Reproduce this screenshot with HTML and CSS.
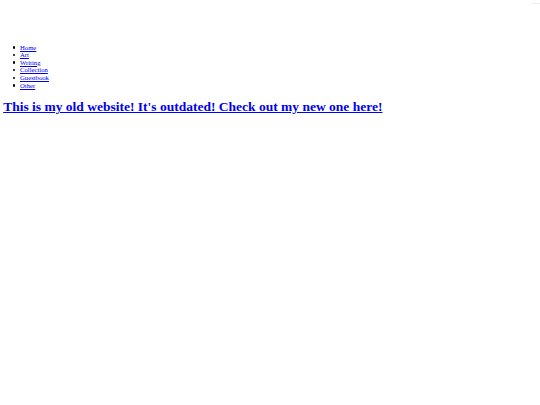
FILE: index.html
```html
<!DOCTYPE html>
<html>
<head>
<meta charset="utf-8">
<link rel="stylesheet" href="styles.css">
</head>
<body>
<div class="corner"></div>
<div class="header"></div>
<ul class="nav">
<li><a href="#">Home</a></li>
<li><a href="#">Art</a></li>
<li><a href="#">Writing</a></li>
<li><a href="#">Collection</a></li>
<li><a href="#">Guestbook</a></li>
<li><a href="#">Other</a></li>
</ul>
<h1 class="title"><a href="#">This is my old website! It's outdated! Check out my new one here!</a></h1>
</body>
</html>
```
FILE: styles.css
```css
html, body { background: #fff; }
body {
  margin: 3.2px;
  font-family: "Liberation Serif", "Times New Roman", serif;
  font-size: 6.7px;
}
a { color: #0000ee; }
.header { height: 34px; }
.nav {
  margin: 6.4px 0;
  padding-left: 16.8px;
  line-height: 7.6px;
  list-style: none;
}
.nav li::before {
  content: "";
  display: inline-block;
  width: 2.4px;
  height: 2.4px;
  border-radius: 50%;
  background: #000;
  margin-left: -7.4px;
  margin-right: 5px;
  vertical-align: 1px;
}
.title {
  font-size: 13.5px;
  margin: 10px 0;
}
.corner {
  position: absolute;
  top: 0;
  right: 0;
  width: 10px;
  height: 3px;
  border-bottom: 1px solid #eee;
  transform: skewX(45deg);
}
```
